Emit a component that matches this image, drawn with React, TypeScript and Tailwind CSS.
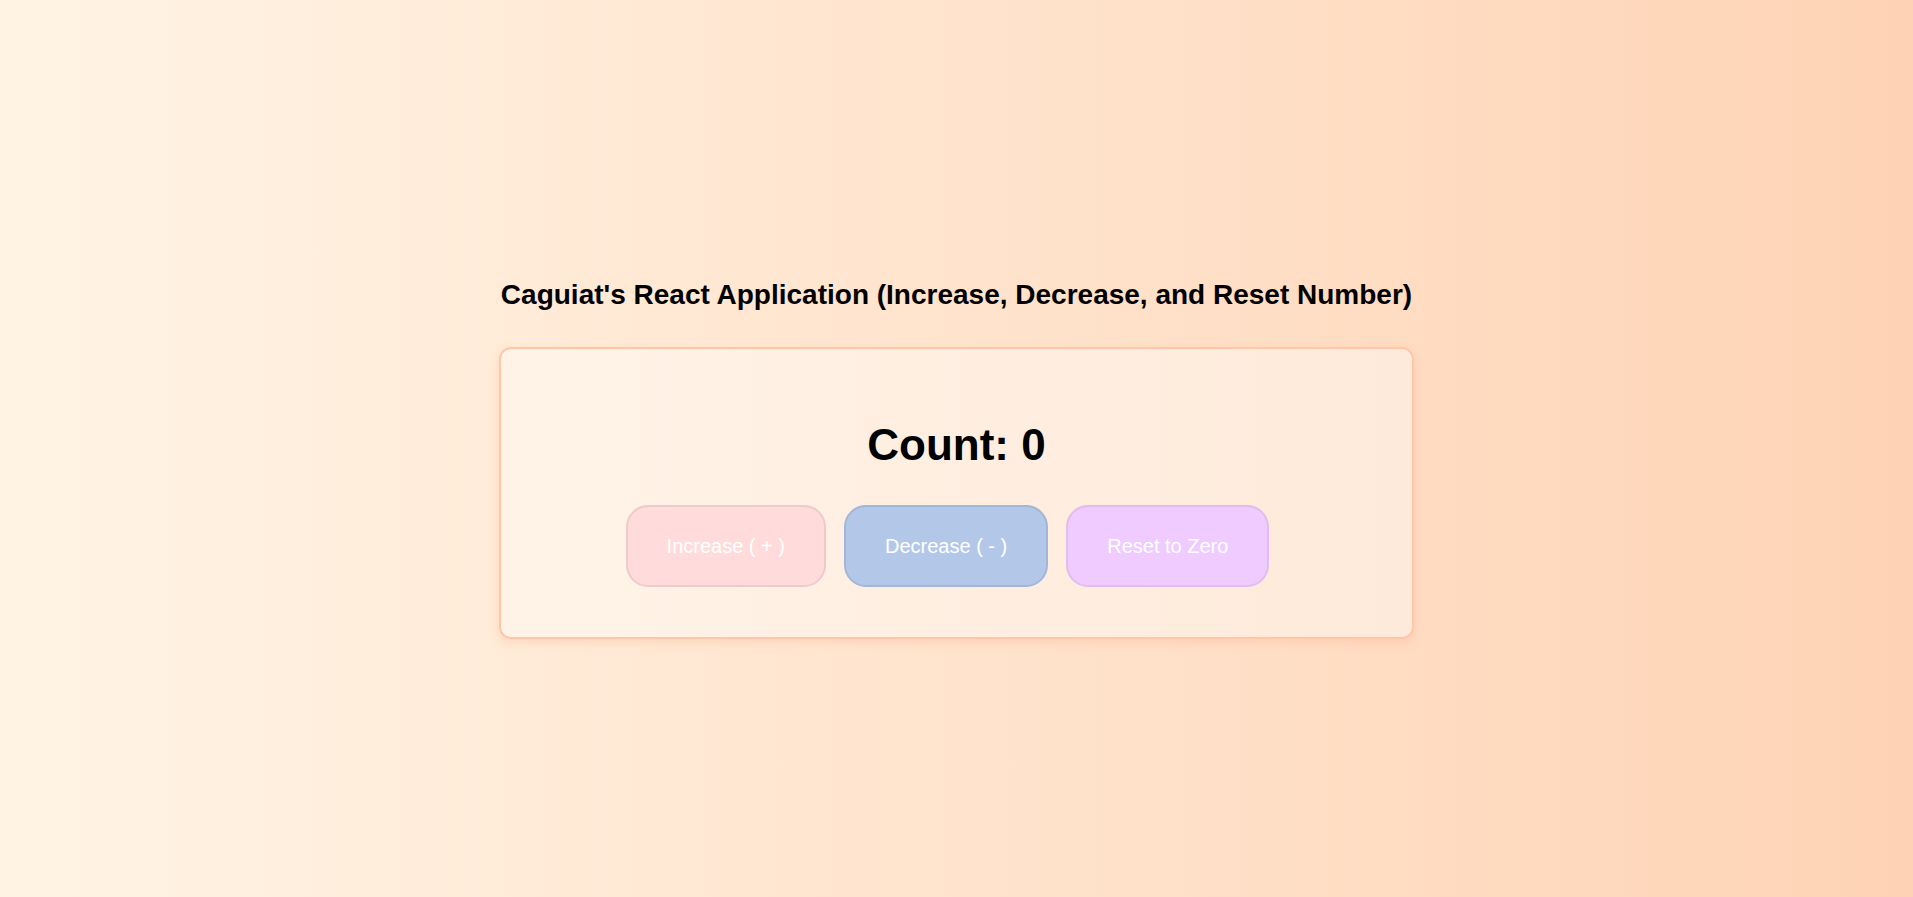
import React, { useState } from "react";

// Simple counter page: title, card with count and three buttons
const font = { fontFamily: '"Liberation Sans", Arial, sans-serif' };

export default function App() {
  const [count, setCount] = useState<number>(0);

  return (
    <div
      className="min-h-[897px] w-full flex flex-col items-center pt-[279px] bg-gradient-to-r from-[#fff4e5] to-[#fed3b5] text-black"
      style={font}
    >
      <h2 className="text-[28px] leading-[32px] font-bold">
        Caguiat's React Application (Increase, Decrease, and Reset Number)
      </h2>

      <div className="mt-[36px] w-[915px] rounded-[12px] border-2 border-[#ffc6a8] bg-white/40 shadow-[0_4px_10px_rgba(255,160,120,0.25)] pt-[70px] pb-[50px] flex flex-col items-center">
        <h1 className="text-[44px] leading-[51px] font-bold">Count: {count}</h1>

        <div className="mt-[35px] flex">
          <button
            onClick={() => setCount(count + 1)}
            className="mr-[18px] px-[39px] py-[28px] text-[20px] leading-[22px] text-white rounded-[22px] border-2 border-[#efcaca] bg-[#ffdbdb]"
          >
            Increase ( + )
          </button>
          <button
            onClick={() => setCount(count - 1)}
            className="mr-[18px] px-[39px] py-[28px] text-[20px] leading-[22px] text-white rounded-[22px] border-2 border-[#a2b6d8] bg-[#b3c8e8]"
          >
            Decrease ( - )
          </button>
          <button
            onClick={() => setCount(0)}
            className="mr-[18px] px-[39px] py-[28px] text-[20px] leading-[22px] text-white rounded-[22px] border-2 border-[#e2bcef] bg-[#f0cbff]"
          >
            Reset to Zero
          </button>
        </div>
      </div>
    </div>
  );
}
